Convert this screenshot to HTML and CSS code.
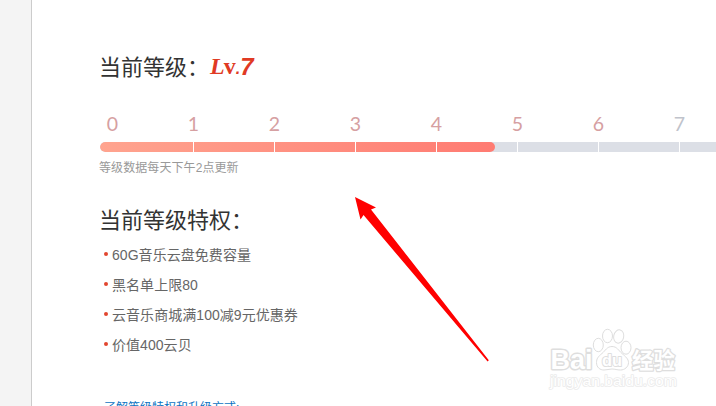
FILE: index.html
```html
<!DOCTYPE html>
<html lang="zh-CN">
<head>
<meta charset="utf-8">
<title>我的等级</title>
<link rel="stylesheet" href="styles.css">
</head>
<body>
<div class="page">
  <aside class="side"></aside>
  <main class="content">
    <h1 class="title">当前等级：<span class="level"><span class="lv">L</span><span class="vee">v</span><span class="dot">.</span><span class="num">7</span></span></h1>
    <div class="labels"><span>0</span><span>1</span><span>2</span><span>3</span><span>4</span><span>5</span><span>6</span><span class="next">7</span></div>
    <div class="bar"><div class="fill"></div><div class="ticks"><i></i><i></i><i></i><i></i><i></i><i></i><i></i><i></i></div></div>
    <p class="note">等级数据每天下午2点更新</p>
    <h2 class="title rights">当前等级特权：</h2>
    <ul class="list">
      <li>60G音乐云盘免费容量</li>
      <li>黑名单上限80</li>
      <li>云音乐商城满100减9元优惠券</li>
      <li>价值400云贝</li>
    </ul>
    <a class="more">了解等级特权和升级方式:</a>
  </main>
  <svg class="arrow" viewBox="340 185 160 185" width="160" height="185"><path d="M355 197 L376 207.5 L371 209.5 L488.8 360.3 L487.600 361.5 L363.5 215 L360.5 219.5Z" fill="#f00"/></svg>
  <svg class="mark" viewBox="540 320 150 80" width="150" height="80">
    <g class="outline">
      <text x="550.5" y="368.5" class="latin" textLength="42" lengthAdjust="spacingAndGlyphs">Bai</text>
      <text x="632" y="367.5" class="cjk" textLength="43" lengthAdjust="spacingAndGlyphs">经验</text>
      <path d="M612 346.500c-5 0-6.500 4-10 7c-4 3-5.500 5.500-5.500 9c0 5 3.500 7.500 7.500 7.500c3 0 5-1 8-1s5 1 8.500 1c4 0 8-3 8-7.500c0-3.500-3-6-6.500-9c-3.500-3-5-7-10-7Z"/>
      <ellipse cx="598.3" cy="345" rx="5" ry="6.700"/>
      <ellipse cx="607.500" cy="336" rx="5" ry="6.700"/>
      <ellipse cx="618.700" cy="336.500" rx="5" ry="6.700" transform="rotate(12 618.700 336.500)"/>
      <ellipse cx="626" cy="347.700" rx="5" ry="6.500"/>
      <text x="602" y="366" class="du" textLength="20" lengthAdjust="spacingAndGlyphs">du</text>
      <text x="550" y="386" class="url" textLength="127" lengthAdjust="spacingAndGlyphs">jingyan.baidu.com</text>
    </g>
  </svg>
</div>
</body>
</html>
```
FILE: styles.css
```css
* { box-sizing: border-box; }
body { margin: 0; overflow: hidden; background: #fff; font-family: "Liberation Sans", "Noto Sans CJK SC", sans-serif; }
.page { position: relative; display: flex; height: 406px; overflow: hidden; }
.side { flex: 0 0 32px; background: #f4f4f4; border-right: 1px solid #ccc; }
.content { flex: 1; min-width: 0; padding: 48px 0 0 67px; overflow: hidden; }
.title { margin: 0; height: 34px; line-height: 34px; font-size: 22px; font-weight: 400; color: #333; font-family: "Noto Sans CJK SC", sans-serif; white-space: nowrap; display: flex; }
.level { display: flex; margin-left: 1px; color: #e03a24; font-weight: 700; line-height: 37px; }
.lv { font-family: "Liberation Serif", serif; font-size: 24px; font-style: italic; }
.vee { font-family: "Liberation Serif", serif; font-size: 24px; margin-left: -1px; }
.dot { font-family: "Liberation Sans", sans-serif; font-size: 16px; line-height: 42px; font-style: italic; }
.num { font-family: "Liberation Sans", sans-serif; font-size: 24px; font-style: italic; }
.labels { display: flex; margin: 28px 0 0 -27px; height: 28px; line-height: 28px; width: 700px; font-family: Lato, sans-serif; font-weight: 400; font-size: 19.5px; color: #d6a0a2; }
.labels span { flex: 0 0 81px; text-align: center; }
.labels .next { color: #c0c3cb; }
.bar { display: grid; margin: 4px 0 0 1px; width: 660px; height: 10px; border-radius: 5px; background: #dcdfe6; overflow: hidden; }
.fill { grid-area: 1 / 1; width: 395px; height: 10px; border-radius: 5px; background: linear-gradient(90deg, #ffa48f, #ff7b72); }
.ticks { grid-area: 1 / 1; display: flex; padding-left: 13px; }
.ticks i { flex: 0 0 81px; border-right: 1px solid #fff; }
.note { margin: 6px 0 0; height: 20px; line-height: 20px; font-size: 12px; letter-spacing: .08px; color: #999; }
.rights { margin-top: 23px; }
.list { margin: 5px 0 0 1px; padding: 0; list-style: none; font-size: 14px; color: #666; letter-spacing: .05px; }
.list li { display: flex; align-items: center; height: 30px; line-height: 30px; white-space: nowrap; }
.list li::before { content: ""; width: 4px; height: 4px; margin: 0 4px; border-radius: 50%; background: #e2462f; position: relative; top: -1px; }
.more { display: block; margin: 38px 0 0 5px; line-height: 20px; font-size: 12px; color: #0c73c2; }
.arrow { position: absolute; left: 340px; top: 185px; }
.mark { position: absolute; left: 540px; top: 320px; }
.outline { fill: #fff; stroke: #dedede; stroke-width: 1; }
.outline text { paint-order: stroke; stroke-linejoin: round; }
.latin { font: 700 27px "Liberation Sans", sans-serif; stroke-width: 3px; }
.cjk { font: 700 22px "Noto Sans CJK SC", sans-serif; stroke-width: 2.5px; }
.du { font: 700 17px "Liberation Sans", sans-serif; stroke-width: 2px; }
.url { font: 15px "Liberation Sans", sans-serif; stroke: #ebebeb; stroke-width: 1.6px; }
```
